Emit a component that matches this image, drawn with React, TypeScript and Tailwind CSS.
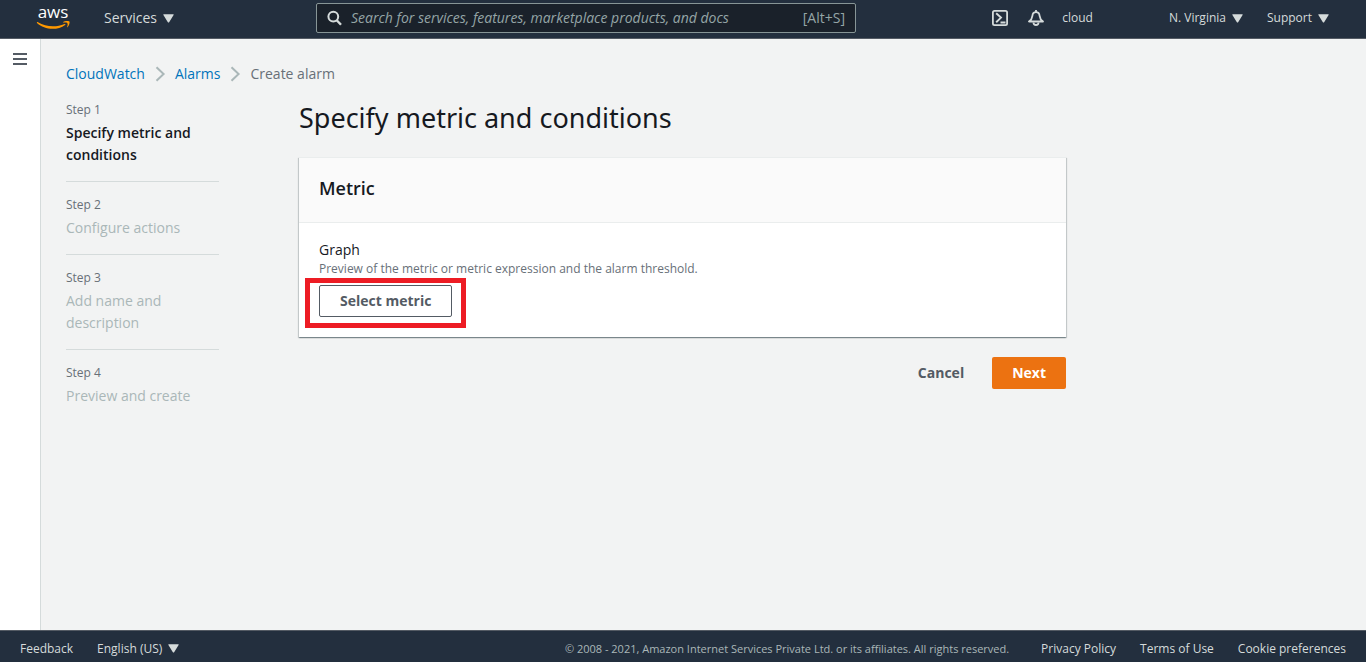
import React from "react";

const steps = [
  { label: "Step 1", title: "Specify metric and conditions", current: true },
  { label: "Step 2", title: "Configure actions", current: false },
  { label: "Step 3", title: "Add name and description", current: false },
  { label: "Step 4", title: "Preview and create", current: false },
];

function Caret() {
  return (
    <svg width="11" height="9" viewBox="0 0 11 9" fill="currentColor" aria-hidden="true">
      <path d="M0.700 0.300h9.600q.6 0 .3.600L6.300 8.100q-.8 1-1.600 0L0.400.9q-.3-.6.300-.6z" />
    </svg>
  );
}

function Chevron() {
  return (
    <svg
      className="text-[#aab7b8]"
      width="16"
      height="16"
      viewBox="0 0 16 16"
      fill="none"
      stroke="currentColor"
      strokeWidth="2"
      aria-hidden="true"
    >
      <path d="M4.500 1.200 11.600 8l-7.100 6.800" />
    </svg>
  );
}

function AwsLogo() {
  return (
    <a href="#home" aria-label="AWS home" className="flex w-[34px] flex-col items-center">
      <span className="h-[13px] text-[17px] leading-[8px] font-medium text-white">aws</span>
      <svg width="34" height="8" viewBox="0 0 34 8" fill="#ff9900" aria-hidden="true">
        <path d="M0.800 1.500C1 1 1.500 1 2 1.300 6.500 4 11.600 5.300 17 5.300c4 0 7.900-.8 11.500-2.300.7-.3 1.300.4.6.9C25.700 6.400 20.900 7.800 16.700 7.800 10.600 7.800 5.100 5.600 1.200 2.200z" />
        <path d="M31.200 1.900C30.600 1.200 28.400 1.500 27.300 1.600c-.4 0-.5-.3-.1-.6C29-.2 32.200 0 33.400.5c.6.7-.1 4-1.900 5.700-.3.3-.6.1-.4-.3.500-1.100.9-3.200.100-4z" />
      </svg>
    </a>
  );
}

function Header() {
  return (
    <header className="flex h-[39px] items-center border-b border-[#545b64] bg-[#232f3e] pr-[37px] pb-0.5 pl-9 text-[12px] font-medium text-[#d5dbdb]">
      <div className="flex w-[280px] shrink-0 items-center gap-[34px]">
        <AwsLogo />
        <button type="button" className="flex items-center gap-1.5 text-[14px] leading-5">
          Services <Caret />
        </button>
      </div>
      <form
        role="search"
        className="flex h-[30px] max-w-[540px] flex-1 items-center rounded-xs border border-[#879596] bg-[#1a212a] px-2.5 text-[14px] font-normal"
        onSubmit={(e) => e.preventDefault()}
      >
        <svg
          width="16"
          height="16"
          viewBox="0 0 16 16"
          fill="none"
          stroke="currentColor"
          strokeWidth="2"
          aria-hidden="true"
        >
          <circle cx="6.300" cy="6.600" r="4.900" />
          <path d="m9.700 10.200 4.300 4.600" strokeWidth="2.400" />
        </svg>
        <input
          type="text"
          aria-label="Search"
          placeholder="Search for services, features, marketplace products, and docs"
          className="ml-2 min-w-0 flex-1 bg-transparent text-[14px] leading-5 italic outline-none placeholder:text-[#95a5a6]"
        />
        <span className="leading-5 text-[#95a5a6]">[Alt+S]</span>
      </form>
      <div className="ml-auto flex items-center gap-[76px]">
        <div className="flex items-center">
          <button type="button" aria-label="CloudShell">
            <svg width="16" height="16" viewBox="0 0 16 16" fill="none" stroke="currentColor" aria-hidden="true">
              <rect x="0.900" y="0.900" width="14.200" height="14.200" rx="1.600" strokeWidth="1.800" />
              <path d="M4.200 3.200 9 7.600l-4.800 4.600M8.500 12.500h5" strokeWidth="1.900" />
            </svg>
          </button>
          <button type="button" aria-label="Notifications" className="ml-5">
            <svg width="16" height="16" viewBox="0 0 16 16" fill="none" stroke="currentColor" strokeWidth="1.800" aria-hidden="true">
              <path
                d="M8 2.200C5.700 2.200 4.600 3.800 4.400 5.800 4.100 8.500 3.400 9.800 1 11.500h14C12.600 9.800 11.900 8.500 11.600 5.800 11.400 3.800 10.300 2.200 8 2.200z"
                strokeLinejoin="round"
              />
              <path d="M8 0v2M5.500 12.500c0 1.600 1 2.500 2.500 2.500s2.500-.9 2.500-2.500" />
            </svg>
          </button>
          <button type="button" className="ml-[18px]">
            cloud
          </button>
        </div>
        <div className="flex items-center gap-6">
          <button type="button" className="flex items-center gap-1.5">
            N. Virginia <Caret />
          </button>
          <button type="button" className="flex items-center gap-1.5">
            Support <Caret />
          </button>
        </div>
      </div>
    </header>
  );
}

function StepList() {
  return (
    <nav aria-label="Steps" className="w-[153px] shrink-0 pt-[2px]">
      <ol className="divide-y divide-[#d5dbdb]">
        {steps.map((step) => (
          <li key={step.label} className="py-[15px] first:pt-0">
            <p className="text-[12px] leading-4 text-[#687078]">{step.label}</p>
            <p
              aria-current={step.current ? "step" : undefined}
              className={
                step.current
                  ? "mt-1 text-[14px] leading-[22px] font-semibold text-[#16191f]"
                  : "mt-1 text-[14px] leading-[22px] text-[#aab7b8]"
              }
            >
              {step.title}
            </p>
          </li>
        ))}
      </ol>
    </nav>
  );
}

function MetricCard() {
  return (
    <section className="mt-[21px] border-t border-[#eaeded] bg-white shadow-[0_1px_1px_0_rgba(0,28,36,0.3),1px_1px_1px_0_rgba(0,28,36,0.15),-1px_1px_1px_0_rgba(0,28,36,0.15)]">
      <div className="border-b border-[#eaeded] bg-[#fafafa] px-5 pt-5 pb-6">
        <h2 className="text-[18px] leading-5 font-semibold text-[#16191f]">Metric</h2>
      </div>
      <div className="px-5 pt-4 pb-5">
        <h3 className="text-[14px] leading-[22px] text-[#16191f]">Graph</h3>
        <p className="text-[12px] leading-4 text-[#687078]">
          Preview of the metric or metric expression and the alarm threshold.
        </p>
        <div className="relative mt-2 w-fit">
          <button
            type="button"
            className="block h-8 rounded-xs border border-[#545b64] bg-white px-5 text-[14px] leading-5 font-bold text-[#545b64]"
          >
            Select metric
          </button>
          <span className="pointer-events-none absolute -top-[7px] -right-[14px] -bottom-[11px] -left-[14px] border-5 border-[#ed1c24]" />
        </div>
      </div>
    </section>
  );
}

function Footer() {
  return (
    <footer className="flex h-8 items-center justify-between border-t border-[#545b64] bg-[#232f3e] px-5 pt-1 text-[12px] leading-4 font-medium text-[#d5dbdb]">
      <div className="flex items-center gap-6">
        <a href="#feedback">Feedback</a>
        <button type="button" className="flex items-center gap-1.5">
          English (US) <Caret />
        </button>
      </div>
      <div className="flex items-center">
        <p className="mr-8 text-[11px] font-normal text-[#aab7b8]">
          © 2008 - 2021, Amazon Internet Services Private Ltd. or its affiliates. All rights reserved.
        </p>
        <div className="flex gap-6">
          <a href="#privacy">Privacy Policy</a>
          <a href="#terms">Terms of Use</a>
          <button type="button">Cookie preferences</button>
        </div>
      </div>
    </footer>
  );
}

export default function App() {
  return (
    <div className="flex min-h-screen flex-col bg-[#f2f3f3] font-['Open_Sans','Noto_Sans',sans-serif]">
      <Header />
      <div className="flex flex-1">
        <aside className="w-[41px] shrink-0 border-r border-[#d5dbdb] bg-white">
          <button type="button" aria-label="Open navigation" className="mt-3 ml-3 block text-[#545b64]">
            <svg width="16" height="16" viewBox="0 0 16 16" stroke="currentColor" strokeWidth="2" aria-hidden="true">
              <path d="M1 3h14M1 8h14M1 13h14" />
            </svg>
          </button>
        </aside>
        <main className="flex-1 px-[25px] pt-6">
          <nav aria-label="Breadcrumb">
            <ol className="flex items-center gap-[7px] text-[14px] leading-[22px] text-[#687078]">
              <li>
                <a href="#cloudwatch" className="text-[#0073bb]">
                  CloudWatch
                </a>
              </li>
              <Chevron />
              <li>
                <a href="#alarms" className="text-[#0073bb]">
                  Alarms
                </a>
              </li>
              <Chevron />
              <li>Create alarm</li>
            </ol>
          </nav>
          <div className="mt-[15px] flex max-w-[1000px] gap-20">
            <StepList />
            <div className="min-w-0 flex-1">
              <h1 className="font-['Noto_Sans',sans-serif] text-[27px] leading-9 text-[#16191f]">
                Specify metric and conditions
              </h1>
              <MetricCard />
              <div className="mt-5 flex justify-end gap-2 text-[14px] leading-5 font-bold">
                <button type="button" className="h-8 px-5 text-[#545b64]">
                  Cancel
                </button>
                <button type="button" className="h-8 rounded-xs bg-[#ec7211] px-5 text-white">
                  Next
                </button>
              </div>
            </div>
          </div>
        </main>
      </div>
      <Footer />
    </div>
  );
}
